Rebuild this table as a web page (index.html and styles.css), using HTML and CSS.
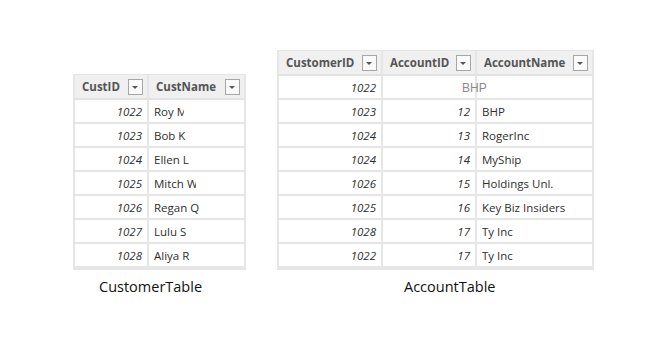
FILE: index.html
```html
<!DOCTYPE html>
<html>
<head>
<meta charset="utf-8">
<link rel="stylesheet" href="styles.css">
</head>
<body>
<div class="page">
  <div class="block block-cust">
    <div class="tbl tbl-cust">
      <div class="hd"><span>CustID</span><i class="dd"></i></div>
      <div class="hd"><span>CustName</span><i class="dd"></i></div>
      <div class="num">1022</div><div class="txt"><span class="clip clip-roy">Roy M</span></div>
      <div class="num">1023</div><div class="txt">Bob K</div>
      <div class="num">1024</div><div class="txt">Ellen L</div>
      <div class="num">1025</div><div class="txt"><span class="clip clip-mitch">Mitch W</span></div>
      <div class="num">1026</div><div class="txt">Regan Q</div>
      <div class="num">1027</div><div class="txt">Lulu S</div>
      <div class="num">1028</div><div class="txt">Aliya R</div>
    </div>
    <div class="label label-cust">CustomerTable</div>
  </div>
  <div class="block block-acct">
    <div class="tbl tbl-acct">
      <div class="hd"><span>CustomerID</span><i class="dd"></i></div>
      <div class="hd"><span>AccountID</span><i class="dd"></i></div>
      <div class="hd"><span>AccountName</span><i class="dd"></i></div>
      <div class="num">1022</div><div class="num"></div><div class="txt overlay-cell"><span class="overlay">BHP</span></div>
      <div class="num">1023</div><div class="num">12</div><div class="txt">BHP</div>
      <div class="num">1024</div><div class="num">13</div><div class="txt">RogerInc</div>
      <div class="num">1024</div><div class="num">14</div><div class="txt">MyShip</div>
      <div class="num">1026</div><div class="num">15</div><div class="txt">Holdings Unl.</div>
      <div class="num">1025</div><div class="num">16</div><div class="txt">Key Biz Insiders</div>
      <div class="num">1028</div><div class="num">17</div><div class="txt">Ty Inc</div>
      <div class="num">1022</div><div class="num">17</div><div class="txt">Ty Inc</div>
    </div>
    <div class="label label-acct">AccountTable</div>
  </div>
</div>
</body>
</html>
```

FILE: styles.css
```css
html, body {
  margin: 0;
  padding: 0;
  background: #ffffff;
}
.page {
  display: flex;
  align-items: flex-end;
  gap: 31px;
  padding: 50px 0 0 73px;
  font-family: "Open Sans", "Noto Sans", sans-serif;
}
.block {
  display: flex;
  flex-direction: column;
}
.tbl {
  display: grid;
  grid-auto-rows: 24px;
  border: 2px solid #e6e6e6;
  border-top-width: 1px;
  background: #fff;
}
.tbl-cust {
  grid-template-columns: 74px 95px;
  grid-template-rows: 25px;
}
.tbl-acct {
  grid-template-columns: 104px 94px 115px;
  grid-template-rows: 25px;
}
.tbl > div {
  border-right: 2px solid #e6e6e6;
  border-bottom: 2px solid #e6e6e6;
  box-sizing: border-box;
  display: flex;
  align-items: center;
  font-size: 11.5px;
  color: #2e2e2e;
  white-space: nowrap;
  overflow: hidden;
}
.tbl-cust > div:nth-child(2n),
.tbl-acct > div:nth-child(3n) {
  border-right: none;
}
.tbl > .hd {
  background: #f0f0f0;
  font-weight: 700;
  font-size: 11.5px;
  color: #555555;
  padding: 0 4px 0 7px;
  justify-content: space-between;
  border-bottom: 2px solid #e2e2e2;
}
.dd {
  width: 15px;
  height: 16px;
  border: 1px solid #a6a6a6;
  background: #fafafa;
  box-sizing: border-box;
  position: relative;
  flex: none;
}
.dd::after {
  content: "";
  position: absolute;
  left: 3px;
  top: 6px;
  border-left: 3.5px solid transparent;
  border-right: 3.5px solid transparent;
  border-top: 3px solid #555;
}
.num {
  justify-content: flex-end;
  font-style: italic;
  padding-right: 5px;
}
.txt {
  padding-left: 5px;
}
.clip {
  display: inline-block;
  overflow: hidden;
}
.clip-roy {
  width: 30px;
}
.clip-mitch {
  width: 42px;
}
.tbl > .overlay-cell {
  overflow: visible;
  position: relative;
}
.overlay {
  position: absolute;
  left: -15px;
  top: 5px;
  font-family: "Liberation Sans", Arial, sans-serif;
  font-size: 12px;
  color: #8a8a8a;
  font-style: normal;
}
.label {
  font-family: "Open Sans", "Noto Sans", sans-serif;
  font-size: 14.5px;
  color: #111111;
  margin-top: 7px;
  height: 26px;
}
.label-cust {
  padding-left: 26px;
}
.label-acct {
  padding-left: 127px;
}
```
